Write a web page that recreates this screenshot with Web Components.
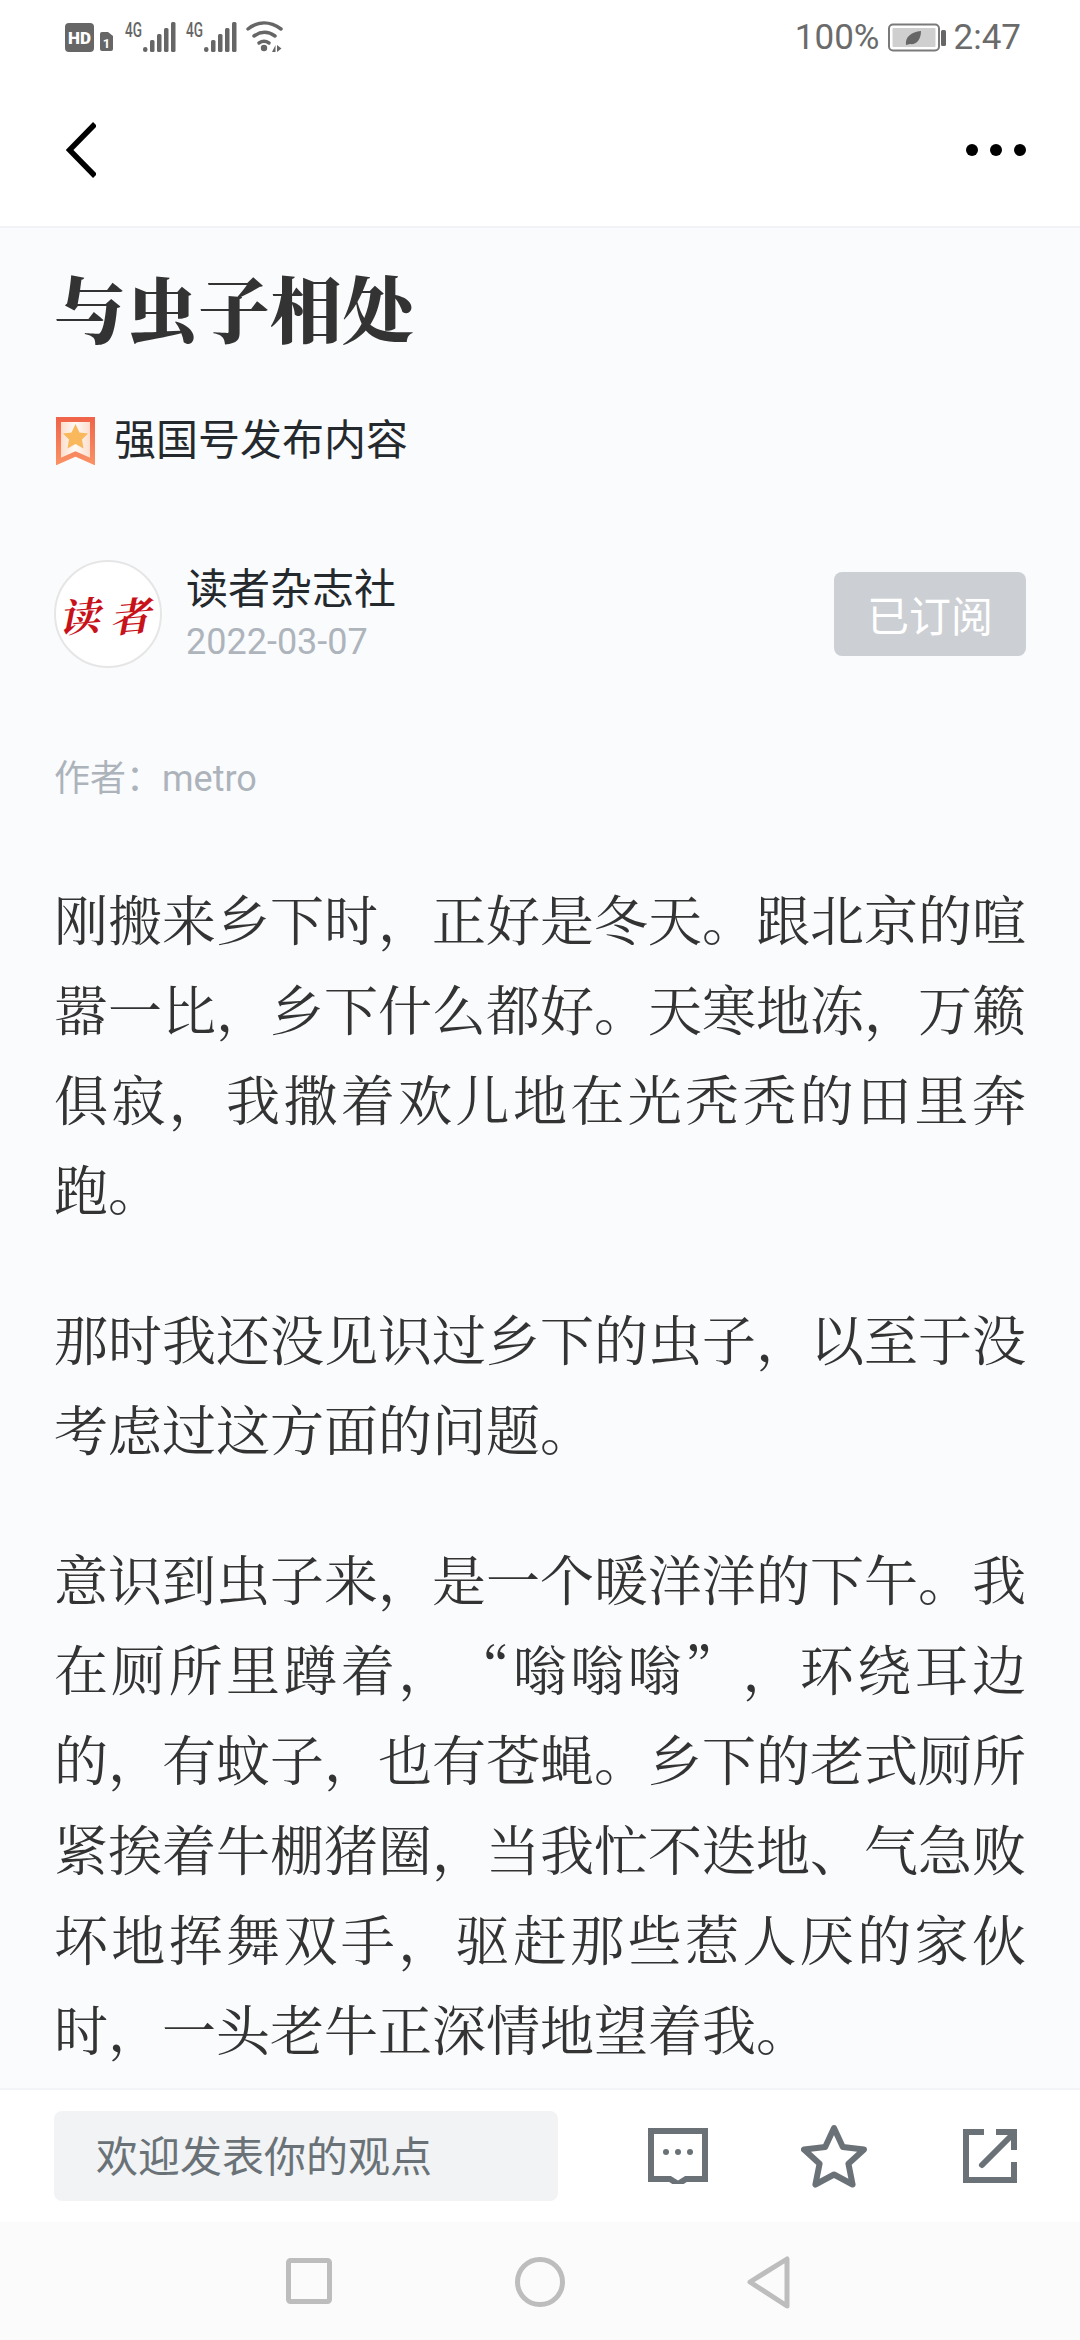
<!DOCTYPE html>
<html lang="zh-CN">
<head>
<meta charset="utf-8">
<title>与虫子相处</title>
<style>
  html, body { margin: 0; height: 100%; }
  body {
    width: 1080px; height: 2340px; overflow: hidden;
    display: flex; flex-direction: column;
    background: #fafbfd;
    font-family: "Noto Sans CJK SC", Roboto, sans-serif;
  }
</style>
</head>
<body>
<status-bar></status-bar>
<top-nav></top-nav>
<article-page>
  <h-title slot="title">与虫子相处</h-title>
  <author-row slot="author" name="读者杂志社" date="2022-03-07"></author-row>
  <p>刚搬来乡下时，正好是冬天。跟北京的喧嚣一比，乡下什么都好。天寒地冻，万籁俱寂，我撒着欢儿地在光秃秃的田里奔跑。</p>
  <p>那时我还没见识过乡下的虫子，以至于没考虑过这方面的问题。</p>
  <p>意识到虫子来，是一个暖洋洋的下午。我在厕所里蹲着，“嗡嗡嗡”，环绕耳边的，有蚊子，也有苍蝇。乡下的老式厕所紧挨着牛棚猪圈，当我忙不迭地、气急败坏地挥舞双手，驱赶那些惹人厌的家伙时，一头老牛正深情地望着我。</p>
</article-page>
<comment-bar></comment-bar>
<system-nav></system-nav>

<script>
class StatusBar extends HTMLElement {
  constructor() {
    super();
    this.attachShadow({ mode: 'open' });
    this.shadowRoot.innerHTML = `
      <style>
        :host { display: flex; justify-content: space-between; align-items: flex-start; height: 72px; background: #fff; flex: none; }
        svg { display: block; }
        .left { margin: 16px 0 0 56px; }
        .right { display: flex; align-items: center; gap: 8px; margin: 18px 59px 0 0; font: 35px/40px Roboto, sans-serif; color: #6b6b6b; }
      </style>
      <div class="left">
        <svg width="230" height="44" viewBox="0 0 230 44">
          <rect x="9" y="7" width="29" height="29" rx="4" fill="#666"/>
          <text x="23.500" y="27.500" text-anchor="middle" font-family="Roboto" font-weight="900" font-size="17" fill="#fff">HD</text>
          <path d="M44 18a2 2 0 0 1 2-2h6l5 4v13a2 2 0 0 1-2 2h-9a2 2 0 0 1-2-2z" fill="#666"/>
          <text x="50.500" y="32" text-anchor="middle" font-family="Roboto" font-weight="700" font-size="13" fill="#fff">1</text>
          <g fill="#666">
            <text x="69" y="21" font-family="Roboto" font-weight="500" font-size="21" textLength="17" lengthAdjust="spacingAndGlyphs">4G</text>
            <rect x="87" y="31" width="4.500" height="5" rx="2.200"/>
            <rect x="94" y="24" width="4.500" height="12" rx="1.500"/>
            <rect x="101" y="18" width="4.500" height="18" rx="1.500"/>
            <rect x="108" y="12" width="4.500" height="24" rx="1.500"/>
            <rect x="115" y="6" width="4.500" height="30" rx="1.500"/>
          </g>
          <g fill="#666">
            <text x="130" y="21" font-family="Roboto" font-weight="500" font-size="21" textLength="17" lengthAdjust="spacingAndGlyphs">4G</text>
            <rect x="148" y="31" width="4.500" height="5" rx="2.200"/>
            <rect x="155" y="24" width="4.500" height="12" rx="1.500"/>
            <rect x="162" y="18" width="4.500" height="18" rx="1.500"/>
            <rect x="169" y="12" width="4.500" height="24" rx="1.500"/>
            <rect x="176" y="6" width="4.500" height="30" rx="1.500"/>
          </g>
          <g fill="none" stroke="#666" stroke-width="3.500" stroke-linecap="round">
            <path d="M192 13c10-8 22-8 33 0"/>
            <path d="M198 20c7-5 14-5 21 0"/>
            <path d="M203 27c3-2 7-2 10 0"/>
          </g>
          <circle cx="208" cy="32" r="3.200" fill="#666"/>
          <path d="M216 36l3.500-7v7zM221 29l4.500 3.500-4.500 3.500z" fill="#666"/>
        </svg>
      </div>
      <div class="right">
        <span>100%</span>
        <svg width="58" height="30" viewBox="0 0 58 30">
          <rect x="1" y="1.500" width="50" height="26" rx="4" fill="none" stroke="#7a7a7a" stroke-width="2"/>
          <rect x="4.500" y="5" width="43" height="19" rx="1" fill="#cfcfcf"/>
          <rect x="53" y="7" width="5" height="16" rx="1.500" fill="#666"/>
          <path d="M18 22c-1-8 5-13 15-14 0 9-5 14-11 13z" fill="#666"/>
        </svg>
        <span>2:47</span>
      </div>
    `;
  }
}
customElements.define('status-bar', StatusBar);

class TopNav extends HTMLElement {
  constructor() {
    super();
    this.attachShadow({ mode: 'open' });
    this.shadowRoot.innerHTML = `
      <style>
        :host { display: flex; justify-content: space-between; align-items: center; height: 152px; padding: 2px 54px 0 66px; background: #fff; border-bottom: 2px solid #f2f3f6; flex: none; }
        svg { display: block; }
      </style>
      <svg width="30" height="58" viewBox="0 0 30 58"><path d="M29 3L3.500 29 29 55" fill="none" stroke="#000" stroke-width="5.500"/></svg>
      <svg width="60" height="12" viewBox="0 0 60 12" fill="#000"><circle cx="6" cy="6" r="6"/><circle cx="30" cy="6" r="6"/><circle cx="54" cy="6" r="6"/></svg>
    `;
  }
}
customElements.define('top-nav', TopNav);

class HTitle extends HTMLElement {
  constructor() {
    super();
    this.attachShadow({ mode: 'open' });
    this.shadowRoot.innerHTML = `
      <style>
        :host { display: block; font: 900 72px/100px "Noto Serif CJK SC", "Noto Sans CJK SC", serif; color: #333; }
      </style>
      <slot></slot>
    `;
  }
}
customElements.define('h-title', HTitle);

class AuthorRow extends HTMLElement {
  constructor() {
    super();
    this.attachShadow({ mode: 'open' });
    this.shadowRoot.innerHTML = `
      <style>
        :host { display: flex; align-items: center; }
        .logo { width: 104px; height: 104px; border: 2px solid #e6e6e6; border-radius: 50%; background: #fff; display: flex; justify-content: center; align-items: center; gap: 11px; flex: none; color: #c8121a; font: 700 40px/1 "Noto Serif CJK SC", "Noto Sans CJK SC", serif; }
        .logo span { display: block; transform: skewX(-16deg) rotate(-5deg); }
        .info { flex: 1; margin-left: 24px; }
        .name { font: 42px/56px "Noto Sans CJK SC", sans-serif; color: #24292e; }
        .date { font: 36px/56px Roboto, sans-serif; color: #aeb4bb; }
        .btn { width: 192px; height: 84px; border-radius: 8px; background: #cccfd3; color: #fff; font: 42px/84px "Noto Sans CJK SC", sans-serif; text-align: center; }
      </style>
      <div class="logo"><span>读</span><span>者</span></div>
      <div class="info">
        <div class="name">${this.getAttribute('name')}</div>
        <div class="date">${this.getAttribute('date')}</div>
      </div>
      <div class="btn">已订阅</div>
    `;
  }
}
customElements.define('author-row', AuthorRow);

class ArticlePage extends HTMLElement {
  constructor() {
    super();
    this.attachShadow({ mode: 'open' });
    this.shadowRoot.innerHTML = `
      <style>
        :host { display: block; flex: 1; min-height: 0; overflow: hidden; padding: 28px 54px 0; }
        .source { display: flex; align-items: center; gap: 19px; margin-top: 53px; font: 42px/56px "Noto Sans CJK SC", sans-serif; color: #24292e; }
        .source svg { margin: 8px 0 0 2px; }
        svg { display: block; }
        .author-wrap { margin-top: 93px; }
        .by { margin-top: 80px; font: 36px/50px "Noto Sans CJK SC", Roboto, sans-serif; color: #adb3ba; }
        .by b { font: 36px/50px Roboto, sans-serif; }
        .body { margin-top: 69px; font: 54px/90px "Noto Serif CJK SC", "Noto Sans CJK SC", serif; color: #333; text-align: justify; text-spacing-trim: space-all; }
        ::slotted(p) { margin: 0 0 60px; }
      </style>
      <slot name="title"></slot>
      <div class="source">
        <svg width="39" height="48" viewBox="0 0 39 48">
          <defs>
            <linearGradient id="bm" x1="0" y1="0" x2="0" y2="1"><stop offset="0" stop-color="#f0654a"/><stop offset="1" stop-color="#f98f63"/></linearGradient>
            <linearGradient id="bf" x1="0" y1="0" x2="1" y2="0"><stop offset="0" stop-color="#fbd9c6"/><stop offset=".5" stop-color="#fffaf5"/><stop offset="1" stop-color="#fbd9c6"/></linearGradient>
          </defs>
          <path d="M2.500 2.500h34v42L19.500 37 2.500 44.500z" fill="url(#bf)" stroke="url(#bm)" stroke-width="5"/>
          <path d="M19.500 7l4 8.500 8.500 1-6 6 1.500 9-8-4.500-8 4.500 1.500-9-6-6 8.500-1z" fill="#f9b85c"/>
        </svg>
        <span>强国号发布内容</span>
      </div>
      <div class="author-wrap"><slot name="author"></slot></div>
      <div class="by">作者：<b>metro</b></div>
      <div class="body"><slot></slot></div>
    `;
  }
}
customElements.define('article-page', ArticlePage);

class CommentBar extends HTMLElement {
  constructor() {
    super();
    this.attachShadow({ mode: 'open' });
    this.shadowRoot.innerHTML = `
      <style>
        :host { display: flex; align-items: center; height: 134px; box-sizing: border-box; padding: 0 63px 0 54px; background: #fff; border-top: 2px solid #f2f3f6; flex: none; }
        .input { width: 504px; height: 90px; box-sizing: border-box; padding-left: 42px; border-radius: 8px; background: #f1f3f5; color: #6a7277; font: 42px/86px "Noto Sans CJK SC", sans-serif; }
        .icons { margin-left: auto; display: flex; align-items: center; gap: 93px; }
        .icons svg:last-child { margin-left: 3px; }
        svg { display: block; }
      </style>
      <div class="input">欢迎发表你的观点</div>
      <div class="icons">
        <svg width="60" height="56" viewBox="0 0 60 56">
          <path d="M3 3h54v48H38l-8 5-8-5H3z" fill="none" stroke="#6a7277" stroke-width="6"/>
          <g fill="#6a7277"><circle cx="18" cy="24" r="3"/><circle cx="30" cy="24" r="3"/><circle cx="42" cy="24" r="3"/></g>
        </svg>
        <svg width="66" height="64" viewBox="0 0 66 64">
          <path d="M33 4l8.800 19 21.200 2.500-15.600 14.200 4.200 20.800L33 50.500 14.400 60.500l4.200-20.800L3 25.500 24.200 23z" fill="none" stroke="#6a7277" stroke-width="6" stroke-linejoin="round"/>
        </svg>
        <svg width="54" height="54" viewBox="0 0 54 54" fill="none" stroke="#6a7277" stroke-width="6">
          <path d="M21 3H3v48h48V33"/>
          <path d="M19 36L49 6" stroke-linecap="round"/>
          <path d="M33 3h18v18"/>
        </svg>
      </div>
    `;
  }
}
customElements.define('comment-bar', CommentBar);

class SystemNav extends HTMLElement {
  constructor() {
    super();
    this.attachShadow({ mode: 'open' });
    this.shadowRoot.innerHTML = `
      <style>
        :host { display: block; height: 118px; background: #fbfbfb; flex: none; }
        svg { display: block; }
      </style>
      <svg width="1080" height="118" viewBox="0 0 1080 118" fill="none" stroke="#bdbdbd" stroke-width="5" stroke-linejoin="round">
        <rect x="288.500" y="38.500" width="41" height="41" rx="2"/>
        <circle cx="540" cy="60" r="22.500"/>
        <path d="M787 37v47L750 60z"/>
      </svg>
    `;
  }
}
customElements.define('system-nav', SystemNav);
</script>
</body>
</html>
